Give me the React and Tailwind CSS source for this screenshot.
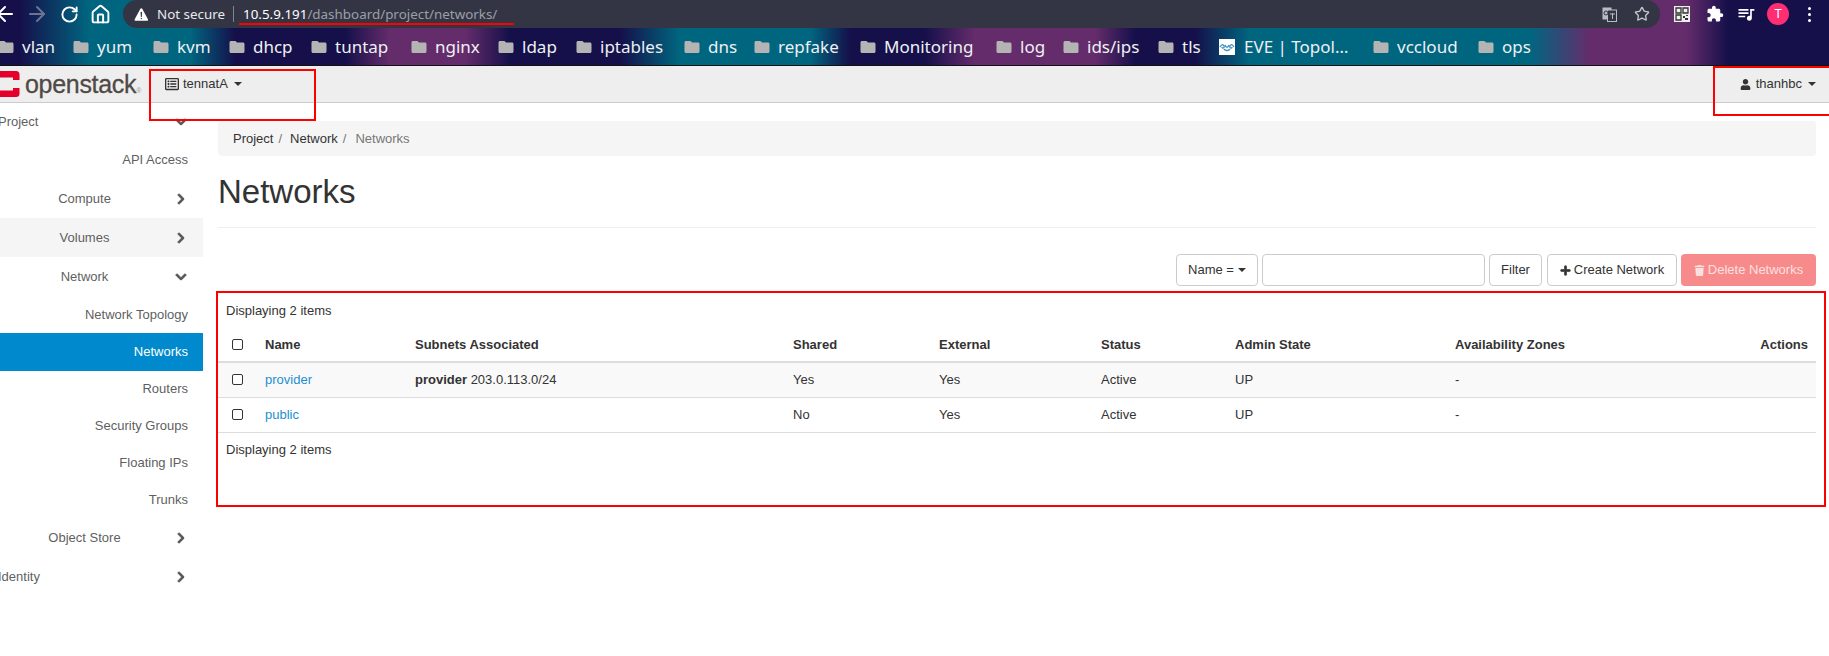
import React from 'react';
import { ArrowLeft, ArrowRight, RotateCw, Home, Star } from 'lucide-react';
import {
  FaChevronRight,
  FaChevronDown,
  FaRegListAlt,
  FaUser,
  FaPlus,
  FaTrash,
} from 'react-icons/fa';
import { MdFolder, MdExtension, MdQueueMusic } from 'react-icons/md';
import { IoWarning } from 'react-icons/io5';

const bookmarks = [
  { label: 'vlan', w: 'w-[75px]' },
  { label: 'yum', w: 'w-[80px]' },
  { label: 'kvm', w: 'w-[76px]' },
  { label: 'dhcp', w: 'w-[82px]' },
  { label: 'tuntap', w: 'w-[100px]' },
  { label: 'nginx', w: 'w-[87px]' },
  { label: 'ldap', w: 'w-[78px]' },
  { label: 'iptables', w: 'w-[108px]' },
  { label: 'dns', w: 'w-[70px]' },
  { label: 'repfake', w: 'w-[106px]' },
  { label: 'Monitoring', w: 'w-[136px]' },
  { label: 'log', w: 'w-[67px]' },
  { label: 'ids/ips', w: 'w-[95px]' },
  { label: 'tls', w: 'w-[60px]' },
  { label: 'EVE | Topol…', w: 'w-[155px]', eve: true },
  { label: 'vccloud', w: 'w-[105px]' },
  { label: 'ops', w: 'w-[60px]' },
];

const sideItems = [
  { label: 'Project', kind: 'edge', open: true, h: 'h-[38px]' },
  { label: 'API Access', kind: 'child', h: 'h-[38px]' },
  { label: 'Compute', kind: 'parent', h: 'h-[39px]' },
  { label: 'Volumes', kind: 'parent', h: 'h-[39px]', hover: true },
  { label: 'Network', kind: 'parent', open: true, h: 'h-[39px]' },
  { label: 'Network Topology', kind: 'child', h: 'h-[37px]' },
  { label: 'Networks', kind: 'child', active: true, h: 'h-[38px]' },
  { label: 'Routers', kind: 'child', h: 'h-[36px]' },
  { label: 'Security Groups', kind: 'child', h: 'h-[37px]' },
  { label: 'Floating IPs', kind: 'child', h: 'h-[37px]' },
  { label: 'Trunks', kind: 'child', h: 'h-[37px]' },
  { label: 'Object Store', kind: 'parent', h: 'h-[39px]' },
  { label: 'Identity', kind: 'edge', h: 'h-[39px]' },
];

const rows = [
  { name: 'provider', subnet: 'provider', cidr: '203.0.113.0/24', shared: 'Yes', rowBg: 'bg-[#f9f9f9]' },
  { name: 'public', subnet: '', cidr: '', shared: 'No', rowBg: 'bg-white' },
];

const Check = () => (
  <span className="block w-[11px] h-[11px] rounded-[2px] border border-[#333] bg-white" />
);

const Caret = ({ className = '' }) => (
  <span className={`inline-block w-0 h-0 border-x-[4px] border-x-transparent border-t-[4px] border-t-[#333] ${className}`} />
);

// the folder row and toolbar share one gradient, so this sits on their parent
const BrowserChrome = () => (
  <div className="h-[65px] bg-[linear-gradient(90deg,#15104a_0px,#15104a_20px,#006680_90px,#006680_190px,#15104a_235px,#15104a_345px,#652c6b_390px,#652c6b_465px,#15104a_510px,#15104a_620px,#006680_680px,#006680_810px,#15104a_850px,#15104a_925px,#652c6b_975px,#652c6b_1095px,#15104a_1135px,#15104a_1195px,#006680_1250px,#006680_1530px,#652c6b_1590px,#652c6b_1686px,#15104a_1728px,#15104a_1829px)] font-['Noto_Sans',sans-serif]">
    <div className="h-[28px] flex items-center relative">
      <div className="w-[123px] shrink-0 flex items-center text-white">
        <ArrowLeft size={24} strokeWidth={2} className="shrink-0 -ml-[7px]" />
        <ArrowRight size={24} strokeWidth={2} className="shrink-0 ml-[8px] text-[#6f7390]" />
        <RotateCw size={19} strokeWidth={2.4} className="shrink-0 ml-[11px]" />
        <Home size={21} strokeWidth={2.2} className="shrink-0 ml-[11px]" />
      </div>
      <div className="w-[1537px] h-[28px] rounded-full bg-[#333545] flex items-center relative">
        <IoWarning size={17} className="ml-[10px] text-white" />
        <span className="ml-[7px] text-[13.4px] text-[#e8eaed] w-[68px] whitespace-nowrap">Not secure</span>
        <span className="ml-[8px] w-px h-[16px] bg-[#80848f]" />
        <span className="ml-[9px] text-[13.4px] text-white">10.5.9.191</span>
        <span className="text-[13.4px] text-[#9aa0a6]">/dashboard/project/networks/</span>
        <span className="absolute left-[116px] top-[23px] w-[275px] h-[2px] bg-[#f00]" />
        <svg width="15" height="15" viewBox="0 0 15 15" className="ml-auto mr-[17px]">
          <rect x="0.5" y="0.5" width="9" height="12" fill="#b9bbc0" />
          <rect x="5.5" y="3" width="9" height="11.5" fill="#333545" stroke="#b9bbc0" />
          <circle cx="4" cy="6" r="2" fill="none" stroke="#333545" />
          <path d="M8 7h5M10.5 6v6" stroke="#b9bbc0" />
        </svg>
        <Star size={16} strokeWidth={2} className="mr-[10px] text-[#c4c6cc]" />
      </div>
      <svg width="16" height="16" viewBox="0 0 16 16" className="ml-[14px]">
        <rect width="16" height="16" fill="#eee" />
        <path d="M2 2h5v5H2zM9 2h5v5H9zM2 9h5v5H2z" fill="none" stroke="#333" strokeWidth="1.3" />
        <path d="M9 10h2v2H9zM12 9h2v1h-2zM11 12h3v2h-3z" fill="#333" />
      </svg>
      <MdExtension size={18} className="ml-[16px] text-white" />
      <MdQueueMusic size={20} className="ml-[12px] text-white" />
      <div className="ml-[11px] w-[22px] h-[22px] rounded-full bg-[#ff2d72] text-white text-[13px] flex items-center justify-center">T</div>
      <div className="ml-[19px] flex flex-col gap-[3px]">
        <span className="w-[3px] h-[3px] rounded-full bg-white" />
        <span className="w-[3px] h-[3px] rounded-full bg-white" />
        <span className="w-[3px] h-[3px] rounded-full bg-white" />
      </div>
    </div>
    <div className="h-[37px] flex items-center -ml-[1px]">
      {bookmarks.map((b) => (
        <div key={b.label} className={`${b.w} shrink-0 flex items-center gap-[9px]`}>
          {b.eve ? (
            <svg width="16" height="16" viewBox="0 0 16 16" className="shrink-0">
              <rect width="16" height="16" fill="#fff" />
              <path d="M1 8c2-3 3-3 4-1s-2 3-2 1M15 8c-2-3-3-3-4-1s2 3 2 1M6 6c1 3 3 3 4 0M5 10c1 2 5 2 6 0" fill="none" stroke="#3f8fbf" strokeWidth="1.3" />
            </svg>
          ) : (
            <MdFolder size={18} className="shrink-0 -mx-[2px] text-[#b4b4b4]" />
          )}
          <span className="text-[17px] text-[#eef0f4] whitespace-nowrap">{b.label}</span>
        </div>
      ))}
    </div>
  </div>
);

const TopNav = () => (
  <div className="h-[38px] bg-[#eeeeee] border-b border-[#cccccc] border-t border-t-[#111] flex items-center text-[13px] text-[#333]">
    <svg width="20" height="26" viewBox="0 0 20 26" className="shrink-0">
      <path d="M0 0h16a3.5 3.5 0 0 1 3.5 3.5V9H13V6.500H0zM0 19.500h13V17h6.500v5.500A3.500 3.500 0 0 1 16 26H0z" fill="#e4002b" />
    </svg>
    <span className="ml-[5px] text-[25px] leading-none text-[#4f4a46] tracking-[-0.3px] [-webkit-text-stroke:0.3px_#4f4a46] w-[113px] whitespace-nowrap">
      openstack<span className="text-[7px] text-[#9a9a9a] tracking-normal [-webkit-text-stroke:0]">®</span>
    </span>
    <FaRegListAlt size={14} className="ml-[27px]" />
    <span className="ml-[4px]">tennatA</span>
    <Caret className="ml-[6px]" />
    <FaUser size={11} className="ml-auto" />
    <span className="ml-[5px]">thanhbc</span>
    <Caret className="ml-[6px] mr-[13px]" />
  </div>
);

const Sidebar = () => (
  <div className="w-[203px] shrink-0 text-[13px] text-[#5f5f5f]">
    {sideItems.map((item) => {
      const Chevron = item.open ? FaChevronDown : FaChevronRight;
      if (item.kind === 'child') {
        return (
          <div
            key={item.label}
            className={`${item.h} flex items-center justify-end pr-[15px] ${item.active ? 'bg-[#0089cc] text-white' : ''}`}
          >
            {item.label}
          </div>
        );
      }
      return (
        <div key={item.label} className={`${item.h} flex items-center ${item.hover ? 'bg-[#f5f5f5]' : ''}`}>
          <span className={`w-[169px] shrink-0 ${item.kind === 'edge' ? 'text-left -ml-[2px]' : 'text-center'}`}>
            {item.label}
          </span>
          <Chevron size={12} className={`${item.kind === 'edge' ? 'ml-[8px]' : 'ml-[6px]'} text-[#555] stroke-[40]`} />
        </div>
      );
    })}
  </div>
);

const Toolbar = () => (
  <div className="mt-[26px] h-[32px] flex justify-end text-[13px] text-[#333]">
    <button className="w-[82px] border border-[#ccc] rounded-[4px] bg-white flex items-center justify-center gap-[4px]">
      Name = <Caret />
    </button>
    <input className="ml-[4px] w-[223px] border border-[#ccc] rounded-[4px] bg-white" />
    <button className="ml-[4px] w-[53px] border border-[#ccc] rounded-[4px] bg-white">Filter</button>
    <button className="ml-[5px] w-[130px] border border-[#ccc] rounded-[4px] bg-white flex items-center justify-center gap-[3px]">
      <FaPlus size={11} className="stroke-[30]" /> Create Network
    </button>
    <button className="ml-[4px] w-[135px] rounded-[4px] bg-[#f78b8b] text-[#fce0e0] flex items-center justify-center gap-[3px]">
      <FaTrash size={11} /> Delete Networks
    </button>
  </div>
);

const NetworksTable = () => (
  <table className="w-full table-fixed border-collapse text-[13px] text-[#333]">
    <colgroup>
      <col className="w-[39px]" />
      <col className="w-[150px]" />
      <col className="w-[378px]" />
      <col className="w-[146px]" />
      <col className="w-[162px]" />
      <col className="w-[134px]" />
      <col className="w-[221px]" />
      <col />
    </colgroup>
    <thead>
      <tr className="h-[34px] border-b-2 border-[#dddddd] font-bold text-left">
        <th className="pl-[14px]"><Check /></th>
        <th className="pl-[8px]">Name</th>
        <th className="pl-[8px]">Subnets Associated</th>
        <th className="pl-[8px]">Shared</th>
        <th className="pl-[8px]">External</th>
        <th className="pl-[8px]">Status</th>
        <th className="pl-[8px]">Admin State</th>
        <th className="pl-[7px]">Availability Zones</th>
        <th className="pr-[8px] text-right">Actions</th>
      </tr>
    </thead>
    <tbody>
      {rows.map((r) => (
        <tr key={r.name} className={`h-[35px] border-b border-[#dddddd] ${r.rowBg}`}>
          <td className="pl-[14px]"><Check /></td>
          <td className="pl-[8px] text-[#1d8fcf]">{r.name}</td>
          <td className="pl-[8px]">
            {r.subnet && <b>{r.subnet}</b>} {r.cidr}
          </td>
          <td className="pl-[8px]">{r.shared}</td>
          <td className="pl-[8px]">Yes</td>
          <td className="pl-[8px]">Active</td>
          <td className="pl-[8px]">UP</td>
          <td className="pl-[7px]">-</td>
          <td />
        </tr>
      ))}
    </tbody>
  </table>
);

export default function App() {
  return (
    <div className="relative h-[656px] overflow-hidden bg-white font-['Liberation_Sans',Arial,sans-serif]">
      <BrowserChrome />
      <TopNav />
      <div className="flex">
        <Sidebar />
        <div className="ml-[15px] w-[1598px] pt-[18px]">
          <div className="h-[35px] rounded-[4px] bg-[#f5f5f5] pl-[15px] flex items-center text-[13px] text-[#333]">
            <span>Project</span>
            <span className="ml-[5px] mr-[8px] text-[#777]">/</span>
            <span>Network</span>
            <span className="ml-[5px] mr-[9px] text-[#777]">/</span>
            <span className="text-[#777]">Networks</span>
          </div>
          <div className="h-[72px] flex items-center border-b border-[#eeeeee] text-[33px] text-[#333]">Networks</div>
          <Toolbar />
          <div className="mt-[7px] h-[35px] pl-[8px] flex items-center text-[13px] text-[#333]">Displaying 2 items</div>
          <NetworksTable />
          <div className="h-[34px] pl-[8px] flex items-center text-[13px] text-[#333]">Displaying 2 items</div>
        </div>
      </div>

      {/* red marks someone drew on top of the screenshot */}
      <div className="absolute left-[149px] top-[69px] w-[167px] h-[52px] border-2 border-[#f00]" />
      <div className="absolute left-[1713px] top-[66px] w-[120px] h-[50px] border-2 border-[#f00]" />
      <div className="absolute left-[216px] top-[291px] w-[1610px] h-[216px] border-2 border-[#f00]" />
    </div>
  );
}
